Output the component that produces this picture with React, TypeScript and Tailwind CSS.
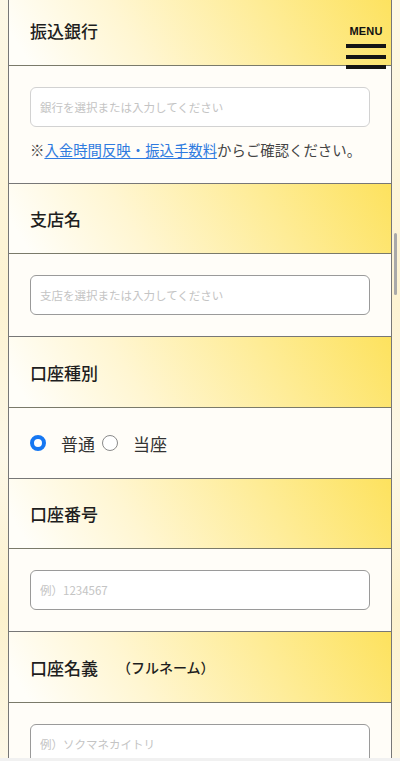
import React from "react";

const HEAD =
  "flex items-center px-[21px] border-b border-[#7a7a6a] bg-[linear-gradient(58deg,#fffef9_5%,#fff6d2_33%,#feec96_68%,#fde25e_100%)]";
const BODY = "bg-[#fffdf8] border-b border-[#777777] px-[21px]";
const INPUT =
  "block w-full h-[40px] rounded-[6px] bg-white px-[9px] text-[11.5px] text-[#333] outline-none placeholder:text-[#c4c4c4]";

function Head({ children, h }: { children: React.ReactNode; h: string }) {
  return (
    <div className={`${HEAD} ${h}`}>
      <h2 className="text-[17px] font-medium text-[#1e1e1e] leading-none flex items-center">{children}</h2>
    </div>
  );
}

export default function App() {
  return (
    <div
      className="relative w-full h-[761px] overflow-hidden bg-[linear-gradient(180deg,#fdf8e6_0%,#fdf3d2_40%,#fdf8e8_60%,#fcf1cc_80%,#fdf8e8_100%)]"
      style={{ fontFamily: '"Noto Sans CJK JP", "Noto Sans", sans-serif' }}
    >
      <div className="mx-[8px] border-x border-[#777777] -mt-[5px]">
        <Head h="h-[71px]">振込銀行</Head>
        <div className={`${BODY} pt-[21px] pb-[21px]`}>
          <input className={`${INPUT} border border-[#d2d2d2]`} placeholder="銀行を選択または入力してください" />
          <p className="mt-[11px] leading-[24px] text-[14.4px] text-[#444] whitespace-nowrap">
            ※<a className="text-[#2f7be0] underline underline-offset-[2px]" href="#">入金時間反映・振込手数料</a>からご確認ください。
          </p>
        </div>

        <Head h="h-[70px]">支店名</Head>
        <div className={`${BODY} pt-[21px] pb-[21px]`}>
          <input className={`${INPUT} border border-[#9a9a9a]`} placeholder="支店を選択または入力してください" />
        </div>

        <Head h="h-[71px]">口座種別</Head>
        <div className={`${BODY} h-[71px] flex items-center`}>
          <label className="flex items-center">
            <span className="w-[16px] h-[16px] rounded-full border-[4.5px] border-[#1677f2] bg-white" />
            <span className="ml-[15px] text-[17px] text-[#333] leading-none">普通</span>
          </label>
          <label className="flex items-center ml-[7px]">
            <span className="w-[16px] h-[16px] rounded-full border-[1.5px] border-[#8a8a8a] bg-white" />
            <span className="ml-[15px] text-[17px] text-[#333] leading-none">当座</span>
          </label>
        </div>

        <Head h="h-[70px]">口座番号</Head>
        <div className={`${BODY} pt-[21px] pb-[21px]`}>
          <input className={`${INPUT} border border-[#9a9a9a]`} placeholder="例）1234567" />
        </div>

        <Head h="h-[71px]">
          口座名義<span className="ml-[19px] text-[14px] font-medium">（フルネーム）</span>
        </Head>
        <div className={`${BODY} pt-[21px] pb-[21px]`}>
          <input className={`${INPUT} border border-[#9a9a9a]`} placeholder="例）ソクマネカイトリ" />
        </div>
      </div>

      {/* MENU button */}
      <button className="absolute top-[26px] right-[14px] flex flex-col items-center">
        <span
          className="text-[11px] font-bold leading-none text-[#111] tracking-[0.2px]"
          style={{ fontFamily: '"Liberation Sans", Arial, sans-serif' }}
        >
          MENU
        </span>
        <span className="mt-[7px] flex flex-col gap-[6.5px]">
          <span className="block w-[40px] h-[4px] bg-[#151515]" />
          <span className="block w-[40px] h-[4px] bg-[#151515]" />
          <span className="block w-[40px] h-[4px] bg-[#151515]" />
        </span>
      </button>

      {/* overlay scrollbar thumb */}
      <div className="absolute left-[393.5px] top-[233px] w-[3.5px] h-[62px] rounded-full bg-[#a9a9a9]" />
      {/* bottom edge strip */}
      <div className="absolute left-0 right-0 bottom-0 h-[3px] bg-[#f1f1f1]" />
    </div>
  );
}
